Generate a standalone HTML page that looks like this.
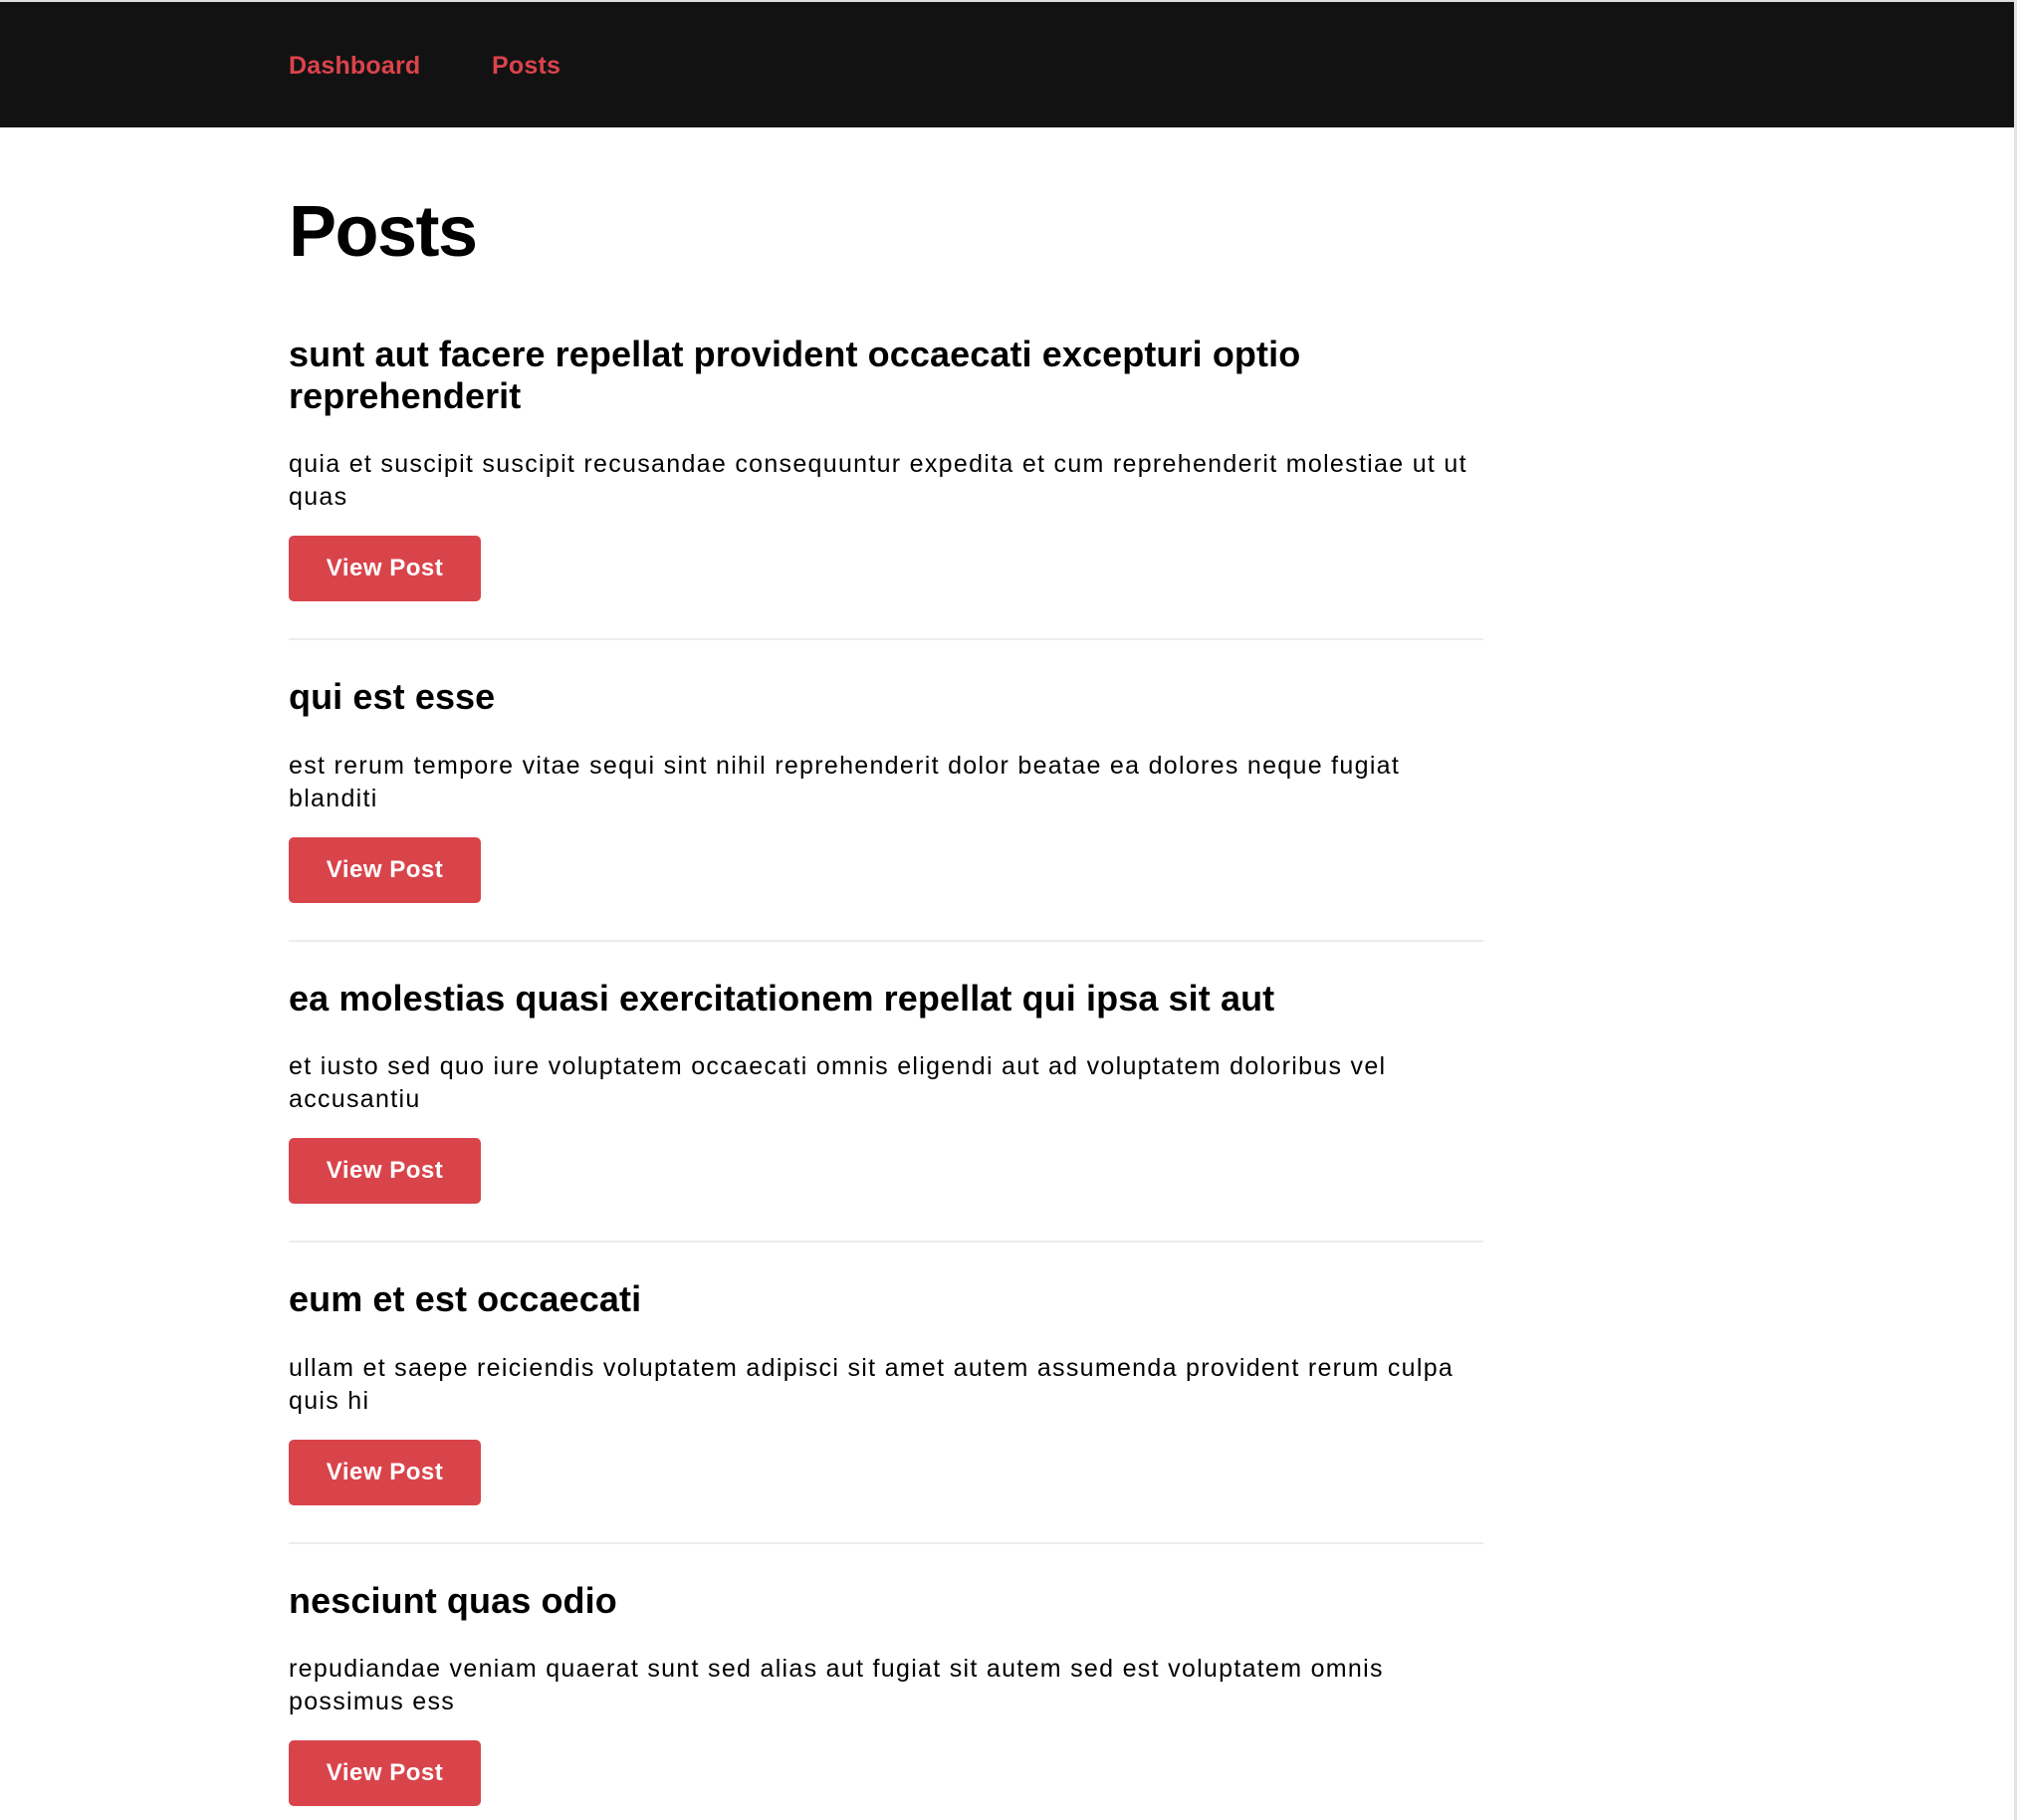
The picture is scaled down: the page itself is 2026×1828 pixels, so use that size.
<!DOCTYPE html>
<html><head><meta charset="utf-8"><style>
*{margin:0;padding:0;box-sizing:border-box}
html,body{width:2026px;height:1828px;overflow:hidden;background:#fff;font-family:"Liberation Sans",Arial,sans-serif;color:#111}
.top{position:absolute;left:0;top:0;width:2026px;height:2px;background:#ddd}
.nav{position:absolute;left:0;top:2px;width:2023px;height:126px;background:#121212}
.nav a{position:absolute;top:49px;font-size:25px;font-weight:bold;color:#dc434b;text-decoration:none;line-height:30px;letter-spacing:0.2px}
.edge{position:absolute;left:2023px;top:0;width:3px;height:1828px;background:#e4e4e4}
.wrap{position:absolute;left:290px;top:128px;width:1200px}
h1{font-size:72px;font-weight:bold;line-height:86px;margin-top:62px;letter-spacing:-1.5px;color:#000}
.post{position:relative}
h2{font-size:36px;font-weight:bold;line-height:41.5px;white-space:nowrap;letter-spacing:0.1px;color:#000}
p{font-size:25px;line-height:33px;margin-top:32px;margin-bottom:-2px;white-space:nowrap;letter-spacing:1.3px;color:#000}
.btn{display:block;width:193px;height:66px;margin-top:24px;background:#d9444b;border-radius:5px;color:#fff;font-weight:bold;font-size:24px;line-height:66px;text-align:center;letter-spacing:0.5px}
hr{border:0;height:2px;background:#ececec;margin-top:37px;margin-bottom:36px}
</style></head><body>
<div class="top"></div>
<div class="nav"><a style="left:290px">Dashboard</a><a style="left:494px">Posts</a></div>
<div class="edge"></div>
<div class="wrap">
<h1>Posts</h1>
<div style="height:59px"></div>
<div class="post"><h2>sunt aut facere repellat provident occaecati excepturi optio<br>reprehenderit</h2>
<p>quia et suscipit suscipit recusandae consequuntur expedita et cum reprehenderit molestiae ut ut<br>quas</p>
<span class="btn">View Post</span></div>
<hr>
<div class="post"><h2>qui est esse</h2>
<p>est rerum tempore vitae sequi sint nihil reprehenderit dolor beatae ea dolores neque fugiat<br>blanditi</p>
<span class="btn">View Post</span></div>
<hr>
<div class="post"><h2>ea molestias quasi exercitationem repellat qui ipsa sit aut</h2>
<p>et iusto sed quo iure voluptatem occaecati omnis eligendi aut ad voluptatem doloribus vel<br>accusantiu</p>
<span class="btn">View Post</span></div>
<hr>
<div class="post"><h2>eum et est occaecati</h2>
<p>ullam et saepe reiciendis voluptatem adipisci sit amet autem assumenda provident rerum culpa<br>quis hi</p>
<span class="btn">View Post</span></div>
<hr>
<div class="post"><h2>nesciunt quas odio</h2>
<p>repudiandae veniam quaerat sunt sed alias aut fugiat sit autem sed est voluptatem omnis<br>possimus ess</p>
<span class="btn">View Post</span></div>
</div>
</body></html>
